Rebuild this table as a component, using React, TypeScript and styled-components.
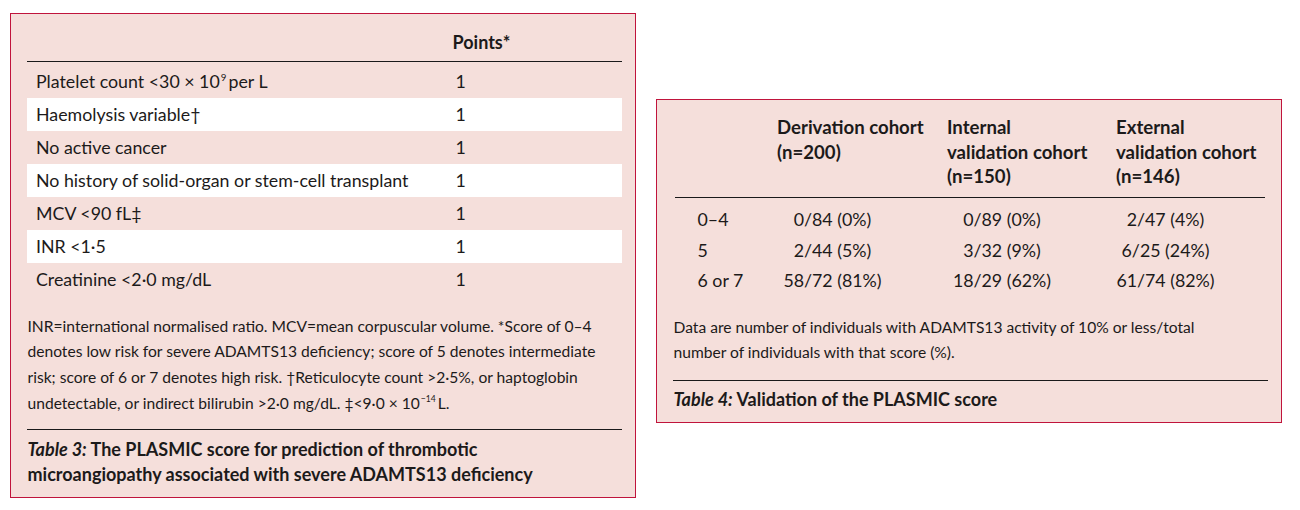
import React from 'react';
import styled, { createGlobalStyle } from 'styled-components';

const Global = createGlobalStyle`
  html, body { margin: 0; padding: 0; background: #ffffff; }
  body { font-family: Lato, "Open Sans", sans-serif; color: #1c1a1a; }
`;

const Page = styled.div`
  display: flex;
  align-items: flex-start;
  gap: 20px;
  padding: 13px 0 0 10px;
`;

const Panel = styled.section<{ $top?: number }>`
  box-sizing: border-box;
  width: 626px;
  margin-top: ${p => p.$top ?? 0}px;
  background: #f5dfdb;
  border: 1.5px solid #c0143c;
  padding: 0 13.5px 0 15.5px;
`;

/* ---------- Table 3 ---------- */
const ScoreGrid = styled.div`
  display: grid;
  grid-template-columns: 418px 1fr;
`;

const PointsHead = styled.div<{ $col: number }>`
  grid-column: ${p => p.$col};
  font-weight: 700;
  font-size: 18px;
  line-height: 24px;
  padding: 15.5px 8px 7px;
  border-bottom: 1px solid #1a1a1a;
  margin-bottom: 3.5px;
`;

const ScoreRow = styled.div<{ $shaded?: boolean }>`
  grid-column: 1 / -1;
  display: grid;
  grid-template-columns: subgrid;
  background: ${p => (p.$shaded ? '#ffffff' : 'transparent')};
  font-size: 17.8px;
  line-height: 33px;
  height: 33px;
`;

const LabelCell = styled.div`
  padding-left: 9.5px;
  white-space: nowrap;
`;

const PointCell = styled.div`
  padding-left: 11px;
`;

const Sup = styled.sup`
  font-size: 0.55em;
  line-height: 0;
  vertical-align: 0.75em;
  margin: 0 2px 0 1px;
`;

const Note = styled.p<{ $gap: number; $pad: number }>`
  margin: ${p => p.$gap}px 0 0;
  padding: 0 0 ${p => p.$pad}px 1px;
  font-size: 15.6px;
  line-height: 25.7px;
  border-bottom: 1px solid #1a1a1a;
`;

const Caption = styled.p<{ $top: number; $bottom: number }>`
  margin: 0;
  padding: ${p => p.$top}px 0 ${p => p.$bottom}px 1px;
  font-weight: 700;
  font-size: 18px;
  line-height: 25px;
`;

const Em = styled.em`
  font-style: italic;
`;

/* ---------- Table 4 ---------- */
const CohortGrid = styled.div`
  display: grid;
  grid-template-columns: 93px 170px 169px 158px;
  margin-left: 2px;
`;

const CohortHead = styled.div`
  font-weight: 700;
  font-size: 18.6px;
  line-height: 24.5px;
  padding: 15.25px 4px 7.75px 9.5px;
  border-bottom: 1px solid #1a1a1a;
  margin-bottom: 6.75px;
`;

const ScoreCell = styled.div`
  font-size: 17.8px;
  line-height: 30.5px;
  padding-left: 23px;
  white-space: nowrap;
`;

const DataCell = styled.div`
  font-size: 17.8px;
  line-height: 30.5px;
  text-align: center;
  padding-right: 40px;
  white-space: nowrap;
`;

const scoreRows: { label: React.ReactNode; shaded: boolean }[] = [
  { label: <>Platelet count &lt;30 × 10<Sup>9</Sup>per L</>, shaded: false },
  { label: 'Haemolysis variable†', shaded: true },
  { label: 'No active cancer', shaded: false },
  { label: 'No history of solid-organ or stem-cell transplant', shaded: true },
  { label: 'MCV <90 fL‡', shaded: false },
  { label: 'INR <1·5', shaded: true },
  { label: 'Creatinine <2·0 mg/dL', shaded: false },
];

const cohortRows = [
  ['0–4', '0/84 (0%)', '0/89 (0%)', '2/47 (4%)'],
  ['5', '2/44 (5%)', '3/32 (9%)', '6/25 (24%)'],
  ['6 or 7', '58/72 (81%)', '18/29 (62%)', '61/74 (82%)'],
];

export default function App() {
  return (
    <>
      <Global />
      <Page>
        <Panel>
          <ScoreGrid>
            <PointsHead $col={1} aria-hidden="true">&nbsp;</PointsHead>
            <PointsHead $col={2}>Points*</PointsHead>
            {scoreRows.map((r, i) => (
              <ScoreRow key={i} $shaded={r.shaded}>
                <LabelCell>{r.label}</LabelCell>
                <PointCell>1</PointCell>
              </ScoreRow>
            ))}
          </ScoreGrid>
          <Note $gap={17.7} $pad={12.5}>
            INR=international normalised ratio. MCV=mean corpuscular volume. *Score of 0–4 denotes low
            risk for severe ADAMTS13 deficiency; score of 5 denotes intermediate risk; score of 6 or 7
            denotes high risk. †Reticulocyte count &gt;2·5%, or haptoglobin undetectable, or indirect
            bilirubin &gt;2·0 mg/dL. ‡&lt;9·0 × 10<Sup>−14</Sup>L.
          </Note>
          <Caption $top={6.5} $bottom={10.5}>
            <Em>Table 3:</Em> The PLASMIC score for prediction of thrombotic
            <br />
            microangiopathy associated with severe ADAMTS13 deficiency
          </Caption>
        </Panel>

        <Panel $top={86}>
          <CohortGrid>
            <CohortHead aria-hidden="true"></CohortHead>
            <CohortHead>Derivation cohort<br />(n=200)</CohortHead>
            <CohortHead>Internal<br />validation cohort<br />(n=150)</CohortHead>
            <CohortHead>External<br />validation cohort<br />(n=146)</CohortHead>
            {cohortRows.map(row => (
              <React.Fragment key={row[0]}>
                <ScoreCell>{row[0]}</ScoreCell>
                <DataCell>{row[1]}</DataCell>
                <DataCell>{row[2]}</DataCell>
                <DataCell>{row[3]}</DataCell>
              </React.Fragment>
            ))}
          </CohortGrid>
          <Note $gap={18.75} $pad={14}>
            Data are number of individuals with ADAMTS13 activity of 10% or less/total
            <br />
            number of individuals with that score (%).
          </Note>
          <Caption $top={6.5} $bottom={10}>
            <Em>Table 4:</Em> Validation of the PLASMIC score
          </Caption>
        </Panel>
      </Page>
    </>
  );
}
